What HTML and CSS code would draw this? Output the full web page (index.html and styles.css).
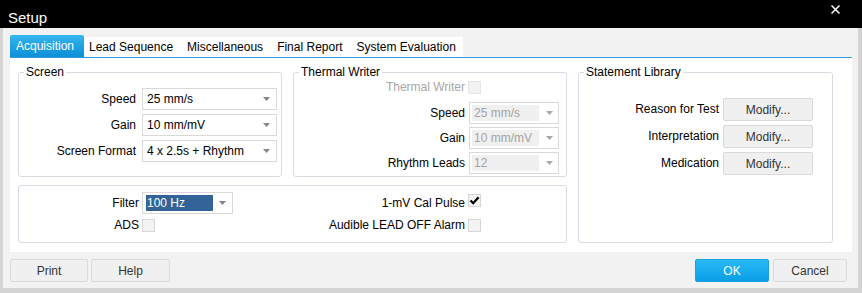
FILE: index.html
```html
<!DOCTYPE html>
<html>
<head>
<meta charset="utf-8">
<link rel="stylesheet" href="styles.css">
</head>
<body>
<div class="window">
  <header class="titlebar">
    <span class="title">Setup</span>
    <span class="close"><svg width="9" height="9" viewBox="0 0 9 9"><path d="M0.5 0.5 L8.5 8.5 M8.5 0.5 L0.5 8.5" stroke="#fff" stroke-width="1.5" fill="none"/></svg></span>
  </header>
  <div class="frame">
    <nav class="tabs">
      <div class="tab active">Acquisition</div>
      <div class="tab-strip">
        <div class="tab first">Lead Sequence</div>
        <div class="tab">Miscellaneous</div>
        <div class="tab">Final Report</div>
        <div class="tab">System Evaluation</div>
      </div>
    </nav>
    <section class="panel">
      <div class="left">
        <div class="top-row">
          <fieldset class="group">
            <legend>Screen</legend>
            <div class="form screen-form">
              <span class="lbl">Speed</span>
              <div class="select"><span class="value">25 mm/s</span><svg class="arrow" width="7" height="4" viewBox="0 0 7 4"><polygon points="0,0 7,0 3.5,4" fill="#858585"/></svg></div>
              <span class="lbl">Gain</span>
              <div class="select"><span class="value">10 mm/mV</span><svg class="arrow" width="7" height="4" viewBox="0 0 7 4"><polygon points="0,0 7,0 3.5,4" fill="#858585"/></svg></div>
              <span class="lbl">Screen Format</span>
              <div class="select"><span class="value">4 x 2.5s + Rhythm</span><svg class="arrow" width="7" height="4" viewBox="0 0 7 4"><polygon points="0,0 7,0 3.5,4" fill="#858585"/></svg></div>
            </div>
          </fieldset>
          <fieldset class="group">
            <legend>Thermal Writer</legend>
            <div class="form thermal-form">
              <span class="lbl disabled top">Thermal Writer</span>
              <span class="check disabled top"></span>
              <span class="lbl">Speed</span>
              <div class="select off"><span class="value">25 mm/s</span><svg class="arrow" width="7" height="4" viewBox="0 0 7 4"><polygon points="0,0 7,0 3.5,4" fill="#a8a8a8"/></svg></div>
              <span class="lbl">Gain</span>
              <div class="select off"><span class="value">10 mm/mV</span><svg class="arrow" width="7" height="4" viewBox="0 0 7 4"><polygon points="0,0 7,0 3.5,4" fill="#a8a8a8"/></svg></div>
              <span class="lbl">Rhythm Leads</span>
              <div class="select off"><span class="value">12</span><svg class="arrow" width="7" height="4" viewBox="0 0 7 4"><polygon points="0,0 7,0 3.5,4" fill="#a8a8a8"/></svg></div>
            </div>
          </fieldset>
        </div>
        <fieldset class="group">
          <div class="filter-form">
            <span class="lbl">Filter</span>
            <div class="select picked"><span class="value">100 Hz</span><svg class="arrow" width="7" height="4" viewBox="0 0 7 4"><polygon points="0,0 7,0 3.5,4" fill="#858585"/></svg></div>
            <span class="lbl">1-mV Cal Pulse</span>
            <span class="check up"><svg width="11" height="11" viewBox="0 0 11 11"><path d="M1.5 5.5 L4.2 8.2 L9.6 2.2" stroke="#000" stroke-width="2.3" fill="none"/></svg></span>
            <span class="lbl">ADS</span>
            <span class="check"></span>
            <span class="lbl">Audible LEAD OFF Alarm</span>
            <span class="check"></span>
          </div>
        </fieldset>
      </div>
      <fieldset class="group">
        <legend>Statement Library</legend>
        <div class="form library-form">
          <span class="lbl">Reason for Test</span>
          <button class="btn">Modify...</button>
          <span class="lbl">Interpretation</span>
          <button class="btn">Modify...</button>
          <span class="lbl">Medication</span>
          <button class="btn">Modify...</button>
        </div>
      </fieldset>
    </section>
    <footer class="buttons">
      <div class="btn-group">
        <button class="btn wide">Print</button>
        <button class="btn wide2">Help</button>
      </div>
      <div class="btn-group right">
        <button class="btn primary">OK</button>
        <button class="btn dlg">Cancel</button>
      </div>
    </footer>
  </div>
</div>
</body>
</html>
```

FILE: styles.css
```css
html, body {
  margin: 0;
  padding: 0;
  background: #fff;
}
body {
  font-family: "Liberation Sans", Arial, sans-serif;
  font-size: 12px;
  color: #000;
}
.window {
  width: 862px;
  height: 293px;
  display: flex;
  flex-direction: column;
  overflow: hidden;
}
.titlebar {
  height: 28px;
  flex: none;
  background: #000;
  color: #fff;
  display: flex;
  align-items: flex-start;
  justify-content: space-between;
  box-sizing: border-box;
}
.title {
  font-size: 15px;
  line-height: 17px;
  margin: 9px 0 0 8px;
}
.close {
  display: block;
  margin: 5px 22px 0 0;
  height: 9px;
}
.close svg { display: block; }
.frame {
  flex: 1;
  background: #f2f2f2;
  border-style: solid;
  border-color: #d4d4d4;
  border-width: 0 4px 5px 3px;
  padding: 7px 6px 6px 7px;
  display: flex;
  flex-direction: column;
  min-height: 0;
}
.tabs {
  display: flex;
  align-items: flex-end;
  height: 22px;
  flex: none;
}
.tab {
  padding: 0 7px;
  line-height: 20px;
  white-space: nowrap;
}
.tab.first { padding-left: 5px; }
.tab.active {
  width: 74px;
  height: 22px;
  line-height: 22px;
  padding-left: 6px;
  box-sizing: border-box;
  color: #fff;
  background: linear-gradient(#35b6ef, #0b8fd6);
  border-radius: 2px 2px 0 0;
}
.tab-strip {
  display: flex;
  background: #fff;
  height: 20px;
}
.panel {
  flex: none;
  border-top: 1px solid #2b9fdb;
  background: #fff;
  padding: 7px 19px 9px 8px;
  display: grid;
  grid-template-columns: 549px 255px;
  column-gap: 11px;
}
.left {
  display: flex;
  flex-direction: column;
  gap: 8px;
}
.top-row {
  display: grid;
  grid-template-columns: 264px 274px;
  column-gap: 11px;
}
fieldset.group {
  margin: 0;
  padding: 0;
  min-width: 0;
  border: 1px solid #d5dce4;
  border-radius: 3px;
}
legend {
  padding: 0 2px;
  margin-left: 5px;
  line-height: 14px;
  font-size: 12px;
}
.form {
  display: grid;
  align-items: center;
}
.lbl {
  justify-self: end;
  white-space: nowrap;
  line-height: 15px;
}
.lbl.disabled { color: #a6a6a6; }
.top { align-self: start; }
.screen-form {
  grid-template-columns: 1fr 135px;
  grid-auto-rows: 22px;
  column-gap: 6px;
  row-gap: 4px;
  padding: 9px 4px 14px 0;
}
.thermal-form {
  grid-template-columns: 1fr 90px;
  grid-template-rows: 19px 22px 22px 22px;
  column-gap: 4px;
  row-gap: 3px;
  padding: 1px 7px 2px 0;
}
.thermal-form .check { margin-top: 1px; margin-left: -1px; }
.library-form {
  grid-template-columns: 1fr 90px;
  grid-auto-rows: 23px;
  column-gap: 4px;
  row-gap: 4px;
  padding: 19px 19px 0 0;
}
.filter-form {
  display: grid;
  grid-template-columns: 120px 91px 229px 13px;
  grid-template-rows: 22px 14px;
  column-gap: 3px;
  row-gap: 4px;
  align-items: center;
  padding: 6px 0 10px 0;
}
.filter-form .check.up { align-self: start; margin-top: 2px; }
.select {
  display: flex;
  align-items: center;
  height: 22px;
  box-sizing: border-box;
  border: 1px solid #d9d9d9;
  background: #fff;
  padding-left: 4px;
  white-space: nowrap;
}
.select .value {
  flex: 1;
  line-height: 15px;
}
.select .arrow {
  display: block;
  flex: none;
  margin-right: 6px;
}
.select.off {
  padding: 2px;
}
.select.off .value {
  background: #f0f0f0;
  color: #a3a3a3;
  align-self: stretch;
  line-height: 16px;
  padding-left: 2px;
}
.select.off .arrow { margin: 0 3px 0 7px; }
.select.picked {
  padding: 2px 3px;
}
.select.picked .value {
  background: #326497;
  color: #fff;
  align-self: stretch;
  line-height: 16px;
  padding-left: 1px;
}
.select.picked .arrow { margin: 0 3px 0 6px; }
.check {
  width: 13px;
  height: 13px;
  box-sizing: border-box;
  border: 1px solid #d6d6d6;
  background: #f3f3f3;
  display: flex;
  align-items: center;
  justify-content: center;
}
.check.disabled {
  border-color: #e6e6e6;
  background: #f2f2f2;
}
.check svg { display: block; }
.btn {
  font-family: "Liberation Sans", Arial, sans-serif;
  font-size: 12px;
  color: #333;
  background: #f0f0f0;
  border: 1px solid #dadada;
  border-radius: 2px;
  height: 23px;
  padding: 0;
  margin: 0;
  box-sizing: border-box;
}
.buttons {
  flex: none;
  margin-top: 7px;
  display: flex;
  justify-content: space-between;
}
.btn-group {
  display: flex;
  gap: 3px;
}
.btn-group.right {
  gap: 4px;
  margin-right: 5px;
}
.btn.wide { width: 78px; }
.btn.wide2 { width: 79px; }
.btn.dlg { width: 74px; }
.btn.primary {
  width: 74px;
  color: #fff;
  background: linear-gradient(#29b9f6, #089fe6);
  border-color: #1a9fe0;
}
```
